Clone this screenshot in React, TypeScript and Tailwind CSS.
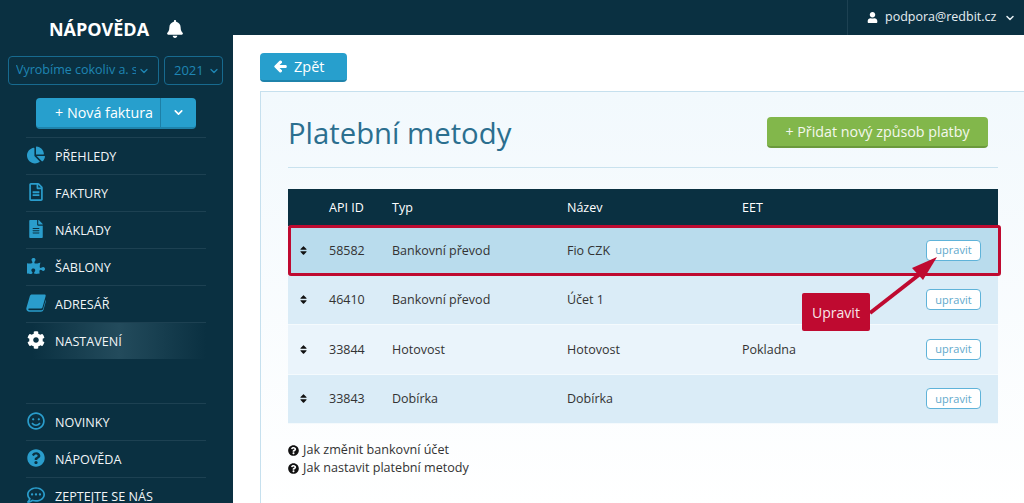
import { ChevronDown } from 'lucide-react';
import {
  FaArrowLeft,
  FaBell,
  FaChartPie,
  FaCog,
  FaFileAlt,
  FaPuzzlePiece,
  FaQuestionCircle,
  FaRegCommentDots,
  FaRegFileAlt,
  FaRegSmile,
  FaSort,
  FaUser,
} from 'react-icons/fa';

// the slanted book icon is not in the package, so it is drawn here
function SlantedBook() {
  return (
    <svg viewBox="0 0 20 18" className="h-[18px] w-[20px]" fill="currentColor">
      <path d="M6 0.5 H18.5 C19.5 0.5 19.9 1.2 19.6 2.2 L16.6 13 C16.3 14 15.6 14.5 14.6 14.5 H3.5 C2.6 14.5 2.2 15 2.3 15.4 C2.4 15.9 2.9 16.2 3.6 16.2 H15.4 C16.2 16.2 16.8 15.8 17.1 15 L19.6 6.2 L20 6.8 L17.5 15.8 C17.1 17 16.3 17.7 15 17.7 H3.4 C1.6 17.7 0.3 16.4 0.3 14.8 C0.3 14.3 0.4 13.8 0.6 13.2 L3.8 2.2 C4.1 1.1 4.9 0.5 6 0.5 Z" />
    </svg>
  );
}

const topNav = [
  { label: 'PŘEHLEDY', icon: FaChartPie },
  { label: 'FAKTURY', icon: FaRegFileAlt },
  { label: 'NÁKLADY', icon: FaFileAlt },
  { label: 'ŠABLONY', icon: FaPuzzlePiece },
  { label: 'ADRESÁŘ', icon: SlantedBook },
];

const bottomNav = [
  { label: 'NOVINKY', icon: FaRegSmile },
  { label: 'NÁPOVĚDA', icon: FaQuestionCircle },
  { label: 'ZEPTEJTE SE NÁS', icon: FaRegCommentDots },
];

const rows = [
  { id: '58582', type: 'Bankovní převod', name: 'Fio CZK', eet: '', bg: 'bg-[#b9dced]', marked: true },
  { id: '46410', type: 'Bankovní převod', name: 'Účet 1', eet: '', bg: 'bg-[#daecf7]' },
  { id: '33844', type: 'Hotovost', name: 'Hotovost', eet: 'Pokladna', bg: 'bg-[#eaf4fb]' },
  { id: '33843', type: 'Dobírka', name: 'Dobírka', eet: '', bg: 'bg-[#daecf7]' },
];

function NavItem({ label, icon: Icon, active }: { label: string; icon: any; active?: boolean }) {
  return (
    <div className="relative flex h-[37px] shrink-0 items-center border-t border-[#1d4152] text-[12.6px] text-[#f1f5f7]">
      {active && (
        <div className="absolute inset-y-0 left-[6px] right-0 bg-gradient-to-r from-transparent via-[#234b5c] to-transparent" />
      )}
      <div className={`relative flex w-[29px] justify-center pb-[3px] pr-[9px] text-[18px] ${active ? 'text-white' : 'text-[#2a9dcc]'}`}>
        <Icon />
      </div>
      <span className="relative pt-[2px]">{label}</span>
    </div>
  );
}

export default function App() {
  return (
    <div className="flex h-[503px] w-[1024px] overflow-hidden bg-white font-['Open_Sans',sans-serif]">
      <aside className="flex w-[233px] shrink-0 flex-col overflow-hidden bg-[#0a3041]">
        <div className="flex h-[56px] shrink-0 items-center justify-center gap-[17px] pt-[2px]">
          <span className="text-[18px] font-bold text-white">NÁPOVĚDA</span>
          <FaBell className="text-[18px] text-white" />
        </div>
        <div className="flex shrink-0 gap-[5px] pl-[8px]">
          <div className="flex h-[29px] w-[151px] items-center overflow-hidden rounded-[4px] border border-[#176a8f] pl-[7px] text-[12.5px] text-[#1f86b4]">
            <span className="w-[120px] overflow-hidden whitespace-nowrap">Vyrobíme cokoliv a. s.</span>
            <ChevronDown size={12} strokeWidth={2.5} className="ml-[2px]" />
          </div>
          <div className="flex h-[29px] w-[59px] items-center rounded-[4px] border border-[#176a8f] pl-[9px] text-[13px] text-[#1f86b4]">
            <span>2021</span>
            <ChevronDown size={12} strokeWidth={2.5} className="ml-[4px]" />
          </div>
        </div>
        <div className="ml-[36px] mt-[13px] flex h-[31px] w-[160px] shrink-0 overflow-hidden rounded-[4px] border-b-2 border-[#1f83ab] bg-[#279fcd] text-white">
          <div className="flex w-[125px] items-center justify-end border-r border-[#1d7fa6] pr-[7px] text-[14.3px]">+ Nová faktura</div>
          <div className="flex flex-1 items-center justify-center">
            <ChevronDown size={13} strokeWidth={3} />
          </div>
        </div>
        <nav className="mx-[26px] mt-[8px] flex w-[180px] shrink-0 flex-col">
          {topNav.map((item) => (
            <NavItem key={item.label} {...item} />
          ))}
          <NavItem label="NASTAVENÍ" icon={FaCog} active />
        </nav>
        <nav className="mx-[26px] mt-[44px] flex w-[180px] shrink-0 flex-col">
          {bottomNav.map((item) => (
            <NavItem key={item.label} {...item} />
          ))}
        </nav>
      </aside>

      <div className="flex min-w-0 flex-1 flex-col">
        <header className="flex h-[35px] shrink-0 justify-end bg-[#0a3041]">
          <div className="flex w-[177px] items-center border-l border-[#1d4152] pl-[19px] text-[12.5px] text-[#e6eef2]">
            <FaUser className="mr-[7px] text-[11px] text-white" />
            <span>podpora@redbit.cz</span>
            <ChevronDown size={12} strokeWidth={3} className="ml-[8px]" />
          </div>
        </header>

        <main className="flex-1 pl-[27px] pt-[18px]">
          <button className="flex h-[29px] w-[87px] items-center rounded-[4px] border-b-2 border-[#1f83ab] bg-[#279fcd] pl-[14px] text-[14.5px] text-white">
            <FaArrowLeft className="mr-[7px] stroke-[40px] text-[13px]" />
            Zpět
          </button>

          <section className="mt-[9px] h-[420px] border-l border-t border-[#c6e0ee] bg-gradient-to-b from-[#f2f9fd] to-white pl-[27px] pr-[26px]">
            <div className="flex h-[76px] items-center justify-between border-b border-[#c9e2ee] pr-[10px] pt-[10px]">
              <h1 className="mb-[2px] text-[29.3px] text-[#2b6f8f]">Platební metody</h1>
              <button className="mb-[4px] flex h-[31px] w-[221px] items-center justify-center rounded-[4px] border-b-2 border-[#6b9a3c] bg-[#82b74b] text-[14.3px] text-[#f4f8ee]">
                + Přidat nový způsob platby
              </button>
            </div>

            <div className="relative mt-[21px] text-[12.5px] text-[#333]">
              <div className="flex h-[37px] items-center bg-[#0a3041] pt-[2px] text-white">
                <div className="w-[41px]" />
                <div className="w-[63px]">API ID</div>
                <div className="w-[175px]">Typ</div>
                <div className="w-[175px]">Název</div>
                <div>EET</div>
              </div>
              {rows.map((row) => (
                <div key={row.id} className={`relative flex h-[49.5px] items-center border-b border-[#f4fafd] ${row.bg}`}>
                  {row.marked && (
                    <div className="absolute -right-[3px] -top-[1px] bottom-[-1px] left-0 rounded-[3px] border-[3px] border-[#bf0a30]" />
                  )}
                  <div className="flex w-[41px] justify-center pr-[10px] text-[11px] text-[#111]">
                    <FaSort />
                  </div>
                  <div className="w-[63px] pt-[2px]">{row.id}</div>
                  <div className="w-[175px] pt-[2px]">{row.type}</div>
                  <div className="w-[175px] pt-[2px]">{row.name}</div>
                  <div className="flex-1 pt-[2px]">{row.eet}</div>
                  <div className="mr-[17px] flex h-[21px] w-[55px] items-center justify-center rounded-[4px] border border-[#5fb3d9] bg-white text-[11px] text-[#5fa9cc]">
                    upravit
                  </div>
                </div>
              ))}

              <div className="absolute left-[514px] top-[104px] flex h-[38px] w-[68px] items-center justify-center rounded-[2px] bg-[#bf0a30] text-[14px] text-[#f8e6ea]">
                Upravit
              </div>
              <svg className="absolute left-[570px] top-[60px] h-[70px] w-[90px]" viewBox="0 0 90 70">
                <path d="M12 64 L62 25" stroke="#bf0a30" strokeWidth="4" fill="none" />
                <path d="M79 8 L54 19 L65 31 Z" fill="#bf0a30" />
              </svg>
            </div>

            <div className="mt-[17px] text-[12.6px] leading-[18px] text-[#333]">
              <div className="flex items-center">
                <FaQuestionCircle className="mr-[4px] text-[11px] text-[#111]" />
                Jak změnit bankovní účet
              </div>
              <div className="flex items-center">
                <FaQuestionCircle className="mr-[4px] text-[11px] text-[#111]" />
                Jak nastavit platební metody
              </div>
            </div>
          </section>
        </main>
      </div>
    </div>
  );
}
